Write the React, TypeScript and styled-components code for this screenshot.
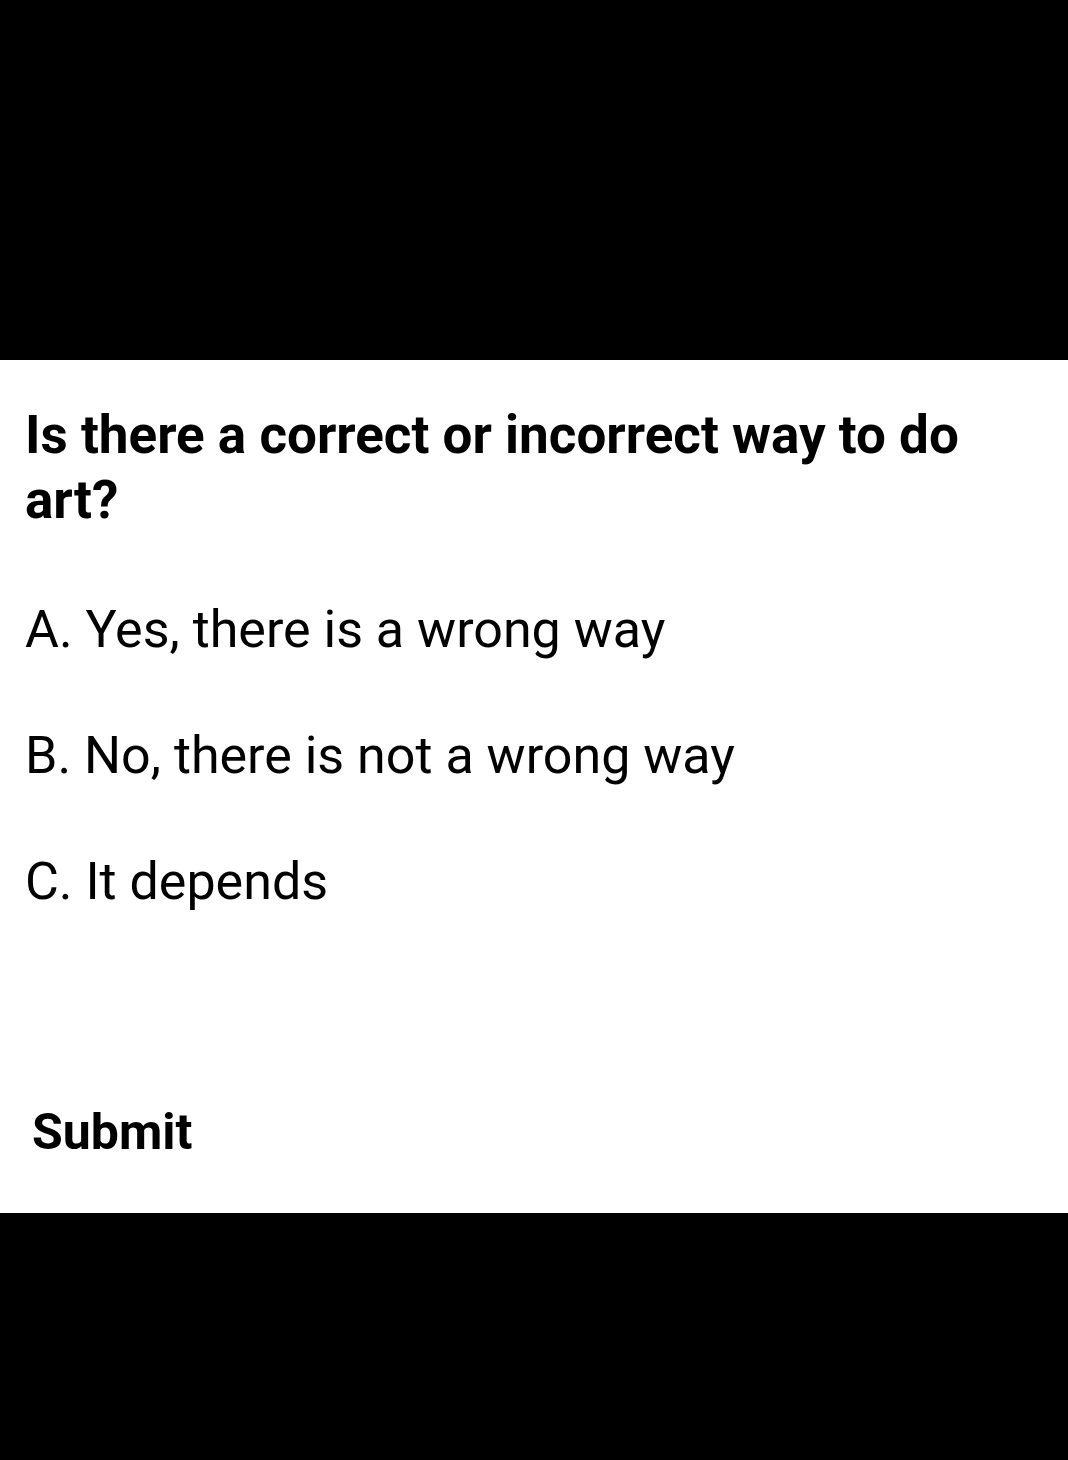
import React from 'react';
import styled, { createGlobalStyle } from 'styled-components';

const GlobalStyle = createGlobalStyle`
  html, body {
    margin: 0;
    padding: 0;
    background: #000;
  }
  body {
    font-family: Roboto, "Liberation Sans", Arial, sans-serif;
    color: #000;
  }
`;

const Screen = styled.div`
  width: 1068px;
  height: 1460px;
  background: #000;
  display: flex;
  flex-direction: column;
`;

const Band = styled.div<{ $h: number }>`
  height: ${(p) => p.$h}px;
  flex-shrink: 0;
  background: #000;
`;

const Card = styled.div`
  height: 853px;
  flex-shrink: 0;
  background: #fff;
  padding: 0 25px;
  box-sizing: border-box;
  display: flex;
  flex-direction: column;
`;

const Question = styled.h2`
  margin: 43px 0 0;
  font-size: 53px;
  font-weight: 700;
  line-height: 65px;
  color: #000;
`;

const Options = styled.div`
  margin-top: 60px;
  display: flex;
  flex-direction: column;
  gap: 52px;
`;

const Option = styled.div`
  font-size: 52px;
  font-weight: 400;
  line-height: 74px;
  color: #000;
`;

const SubmitButton = styled.button`
  margin-top: 178px;
  align-self: flex-start;
  padding: 0 0 0 7px;
  border: none;
  background: none;
  font-family: inherit;
  font-size: 50px;
  font-weight: 700;
  line-height: 70px;
  color: #000;
  cursor: pointer;
`;

const options = ['A. Yes, there is a wrong way', 'B. No, there is not a wrong way', 'C. It depends'];

const App: React.FC = () => {
  return (
    <>
      <GlobalStyle />
      <Screen>
        <Band $h={360} />
        <Card>
          <Question>Is there a correct or incorrect way to do art?</Question>
          <Options>
            {options.map((o) => (
              <Option key={o}>{o}</Option>
            ))}
          </Options>
          <SubmitButton>Submit</SubmitButton>
        </Card>
        <Band $h={247} />
      </Screen>
    </>
  );
};

export default App;
